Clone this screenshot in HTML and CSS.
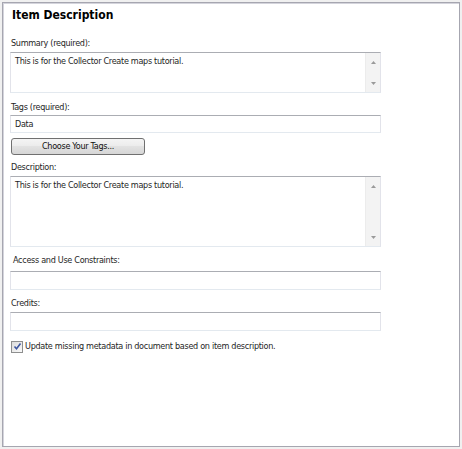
FILE: index.html
```html
<!DOCTYPE html>
<html>
<head>
<meta charset="utf-8">
<link rel="stylesheet" href="styles.css">
</head>
<body>
<div class="page">
  <div class="frame">
    <h1 class="title">Item Description</h1>

    <div class="label l-summary">Summary (required):</div>
    <div class="area area-summary">
      <div class="area-text">This is for the Collector Create maps tutorial.</div>
      <div class="scroll">
        <svg class="arrow" width="7" height="5" viewBox="0 0 7 5"><path d="M1 4 L3.5 1 L6 4 Z" fill="#9a9a9a"/></svg>
        <svg class="arrow" width="7" height="5" viewBox="0 0 7 5"><path d="M1 1 L3.5 4 L6 1 Z" fill="#9a9a9a"/></svg>
      </div>
    </div>

    <div class="label l-tags">Tags (required):</div>
    <div class="input input-tags">Data</div>

    <div class="btn">Choose Your Tags...</div>

    <div class="label l-desc">Description:</div>
    <div class="area area-desc">
      <div class="area-text">This is for the Collector Create maps tutorial.</div>
      <div class="scroll">
        <svg class="arrow" width="7" height="5" viewBox="0 0 7 5"><path d="M1 4 L3.5 1 L6 4 Z" fill="#9a9a9a"/></svg>
        <svg class="arrow" width="7" height="5" viewBox="0 0 7 5"><path d="M1 1 L3.5 4 L6 1 Z" fill="#9a9a9a"/></svg>
      </div>
    </div>

    <div class="label l-access">Access and Use Constraints:</div>
    <div class="input input-access"></div>

    <div class="label l-credits">Credits:</div>
    <div class="input input-credits"></div>

    <div class="check-row">
      <span class="checkbox">
        <svg width="9" height="9" viewBox="0 0 9 9"><path d="M1.5 4.5 L3.5 6.8 L7.5 1.5" fill="none" stroke="#3d56a0" stroke-width="1.6"/></svg>
      </span>
      <span class="check-text">Update missing metadata in document based on item description.</span>
    </div>
  </div>
</div>
</body>
</html>
```

FILE: styles.css
```css
html, body {
  margin: 0;
  padding: 0;
  background: #f0f0f0;
}
.page {
  padding: 2px 2px 0 2px;
  width: 458px;
}
.frame {
  box-sizing: border-box;
  width: 458px;
  height: 445px;
  background: #ffffff;
  border: 1px solid #a6a6b0;
  box-shadow: inset 1px 1px 0 #d4d4dc;
  padding: 4px 0 0 7px;
  font-family: "DejaVu Sans", "Liberation Sans", sans-serif;
  font-stretch: condensed;
  font-size: 9px;
  letter-spacing: -0.3px;
  color: #1e1e1e;
}
.title {
  margin: 0 0 0 2px;
  font-size: 12px;
  letter-spacing: 0;
  line-height: 16px;
  font-weight: bold;
  color: #000;
  height: 16px;
}
.label {
  height: 13px;
  line-height: 13px;
  margin-left: 1px;
  white-space: nowrap;
}
.l-summary { margin-top: 14px; }
.l-tags { margin-top: 8px; }
.l-desc { margin-top: 6px; }
.l-access { margin-top: 7px; margin-left: 3px; }
.l-credits { margin-top: 7px; }

.area, .input {
  box-sizing: border-box;
  width: 371px;
  border: 1px solid #e2e3ea;
  border-top-color: #abadb3;
  border-bottom-color: #e3e9ef;
  background: #fff;
}
.area {
  display: flex;
  margin-top: 2px;
}
.area-summary { height: 41px; }
.area-desc { height: 71px; }
.area-text {
  flex: 1;
  padding: 2px 4px;
  line-height: 13px;
}
.scroll {
  width: 14px;
  background: #f3f3f3;
  border-left: 1px solid #ececec;
  display: flex;
  flex-direction: column;
  justify-content: space-between;
  align-items: center;
  padding: 7px 0 6px;
}
.arrow { display: block; }

.input {
  height: 18px;
  line-height: 16px;
  padding: 0 4px;
}
.input-tags { margin-top: 1px; }
.input-access { margin-top: 4px; height: 19px; }
.input-credits { margin-top: 2px; height: 19px; }

.btn {
  box-sizing: border-box;
  margin-top: 5px;
  margin-left: 1px;
  width: 134px;
  height: 17px;
  border: 1px solid #707070;
  border-radius: 3px;
  background: linear-gradient(#f4f4f4 0%, #ececec 45%, #e2e2e2 50%, #d6d6d6 100%);
  text-align: center;
  line-height: 15px;
  color: #111;
}

.check-row {
  margin-top: 9px;
  margin-left: 1px;
  display: flex;
  align-items: center;
  height: 13px;
}
.checkbox {
  box-sizing: border-box;
  width: 12px;
  height: 12px;
  border: 1px solid #8e8f8f;
  background: linear-gradient(135deg, #dcdcdc, #fafafa);
  display: flex;
  align-items: center;
  justify-content: center;
  margin-right: 2px;
}
.checkbox svg { display: block; }
.check-text { white-space: nowrap; line-height: 13px; }
```
